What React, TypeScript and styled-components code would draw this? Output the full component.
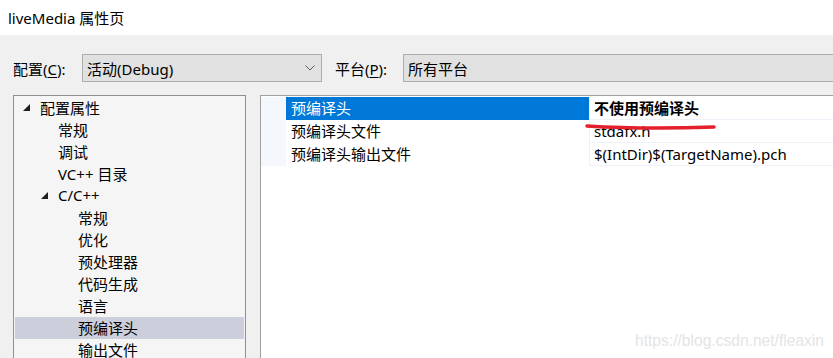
import React from "react";
import styled, { createGlobalStyle } from "styled-components";

const Global = createGlobalStyle`
  html, body { margin: 0; padding: 0; }
  body {
    width: 833px; height: 358px; overflow: hidden;
    font-family: "Noto Sans", "Noto Sans CJK SC", sans-serif;
    color: #000;
  }
`;

const Page = styled.div`
  position: relative;
  width: 833px;
  height: 358px;
  overflow: hidden;
  background: #f0f0f0;
  display: flex;
  flex-direction: column;
`;

const TitleBar = styled.div`
  height: 35px;
  background: #fff;
  display: flex;
  align-items: center;
  padding-left: 8px;
  font-size: 15px;
  flex-shrink: 0;
`;

const Body = styled.div`
  flex: 1;
  display: flex;
  flex-direction: column;
  padding: 19px 0 0 13px;
  min-height: 0;
`;

const ConfigRow = styled.div`
  display: flex;
  align-items: center;
  height: 28px;
`;

const Label = styled.span<{ $w: number; $ml?: number }>`
  width: ${(p) => p.$w}px;
  margin-left: ${(p) => p.$ml ?? 0}px;
  font-size: 15px;
  flex-shrink: 0;
  u { text-underline-offset: 2px; }
`;

const Combo = styled.div<{ $w?: number }>`
  box-sizing: border-box;
  height: 28px;
  ${(p) => (p.$w ? `width: ${p.$w}px;` : "flex: 1; margin-right: -4px;")}
  background: #e1e1e1;
  border: 1px solid #adadad;
  display: flex;
  align-items: center;
  justify-content: space-between;
  padding: 0 6px 0 4px;
  font-size: 15px;
  flex-shrink: 0;
`;

const Panels = styled.div`
  flex: 1;
  display: flex;
  gap: 14px;
  margin-top: 13px;
  min-height: 0;
`;

const TreePanel = styled.div`
  width: 233px;
  box-sizing: border-box;
  border: 1px solid #8f8f96;
  border-bottom: none;
  background: #f5f5f5;
  padding: 1px;
  flex-shrink: 0;
`;

const TreeRow = styled.div<{ $indent: number; $selected?: boolean }>`
  height: 22px;
  box-sizing: border-box;
  padding-bottom: 2px;
  display: flex;
  align-items: center;
  padding-left: ${(p) => p.$indent}px;
  background: ${(p) => (p.$selected ? "#cccedb" : "transparent")};
  font-size: 15px;
  white-space: nowrap;
`;

const Arrow = styled.svg`
  width: 8px;
  height: 8px;
  margin-right: 9px;
  margin-top: 2px;
`;

const GridPanel = styled.div`
  flex: 1;
  border-top: 1px solid #a0a0a0;
  border-left: 1px solid #a0a0a0;
  background: #fff;
  padding-top: 1px;
`;

const GridRow = styled.div`
  display: grid;
  grid-template-columns: 25px 304px 1fr;
  height: 23px;
  box-sizing: border-box;
  border-bottom: 1px solid #eef1f7;
  font-size: 15px;
`;

const Gutter = styled.div`
  background: #f4f7fc;
`;

const NameCell = styled.div<{ $selected?: boolean }>`
  display: flex;
  align-items: center;
  padding: 0 0 2px 5px;
  background: ${(p) => (p.$selected ? "#0078d7" : "#fff")};
  color: ${(p) => (p.$selected ? "#fff" : "#000")};
  border-right: 1px solid #eef1f7;
`;

const ValueCell = styled.div<{ $bold?: boolean }>`
  display: flex;
  align-items: center;
  padding: 0 0 2px 4px;
  font-weight: ${(p) => (p.$bold ? 700 : 400)};
  white-space: nowrap;
`;

const Annotation = styled.svg`
  position: absolute;
  left: 584px;
  top: 122px;
  width: 134px;
  height: 10px;
`;

const Watermark = styled.div`
  position: absolute;
  right: 9px;
  bottom: 8px;
  font-family: "Liberation Sans", Arial, sans-serif;
  font-size: 15.6px;
  color: #e4e4e4;
`;

const tree: { label: string; indent: number; arrow?: boolean; selected?: boolean }[] = [
  { label: "配置属性", indent: 8, arrow: true },
  { label: "常规", indent: 43 },
  { label: "调试", indent: 43 },
  { label: "VC++ 目录", indent: 43 },
  { label: "C/C++", indent: 26, arrow: true },
  { label: "常规", indent: 63 },
  { label: "优化", indent: 63 },
  { label: "预处理器", indent: 63 },
  { label: "代码生成", indent: 63 },
  { label: "语言", indent: 63 },
  { label: "预编译头", indent: 63, selected: true },
  { label: "输出文件", indent: 63 },
];

const rows = [
  { name: "预编译头", value: "不使用预编译头", selected: true, bold: true },
  { name: "预编译头文件", value: "stdafx.h" },
  { name: "预编译头输出文件", value: "$(IntDir)$(TargetName).pch" },
];

export default function App() {
  return (
    <Page>
      <Global />
      <TitleBar>liveMedia 属性页</TitleBar>
      <Body>
        <ConfigRow>
          <Label $w={69}>
            配置(<u>C</u>):
          </Label>
          <Combo $w={240}>
            <span>活动(Debug)</span>
            <svg width="10" height="6" viewBox="0 0 10 6">
              <polyline points="0.5,0.5 5,5 9.5,0.5" fill="none" stroke="#606060" strokeWidth="1" />
            </svg>
          </Combo>
          <Label $w={68} $ml={13}>
            平台(<u>P</u>):
          </Label>
          <Combo>
            <span>所有平台</span>
          </Combo>
        </ConfigRow>
        <Panels>
          <TreePanel>
            {tree.map((t, i) => (
              <TreeRow key={i} $indent={t.indent} $selected={t.selected}>
                {t.arrow && (
                  <Arrow viewBox="0 0 8 8">
                    <polygon points="7,0 7,7 0,7" fill="#1e1e1e" />
                  </Arrow>
                )}
                {t.label}
              </TreeRow>
            ))}
          </TreePanel>
          <GridPanel>
            {rows.map((r, i) => (
              <GridRow key={i}>
                <Gutter />
                <NameCell $selected={r.selected}>{r.name}</NameCell>
                <ValueCell $bold={r.bold}>{r.value}</ValueCell>
              </GridRow>
            ))}
          </GridPanel>
        </Panels>
      </Body>
      <Annotation viewBox="0 0 134 10">
        <path d="M3,4 Q60,7.5 130,5" fill="none" stroke="#e3202b" strokeWidth="3.5" strokeLinecap="round" />
      </Annotation>
      <Watermark>https://blog.csdn.net/fleaxin</Watermark>
    </Page>
  );
}
